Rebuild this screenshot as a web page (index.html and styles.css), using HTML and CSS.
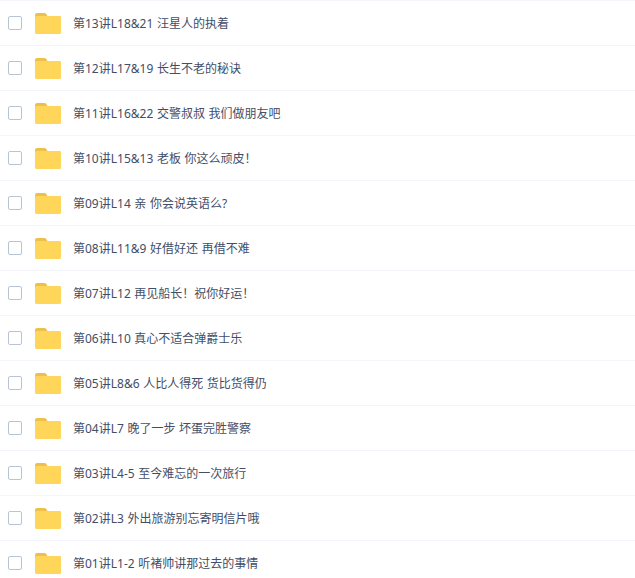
FILE: index.html
```html
<!DOCTYPE html>
<html lang="zh-CN">
<head>
<meta charset="utf-8">
<title>文件列表</title>
<link rel="stylesheet" href="styles.css">
</head>
<body>
<svg class="sprite" width="0" height="0" aria-hidden="true">
  <symbol id="folder" viewBox="0 0 26 21">
    <path class="folder-back" d="M0 2a2 2 0 0 1 2-2h7.5a2 2 0 0 1 1.6.8L12.5 3H24a2 2 0 0 1 2 2v4H0z"/>
    <rect class="folder-front" x="0" y="3" width="26" height="18" rx="1.5"/>
  </symbol>
</svg>
<ul class="list">
  <li class="row"><span class="check"></span><svg class="folder"><use href="#folder"/></svg><span class="name">第13讲L18&amp;21 汪星人的执着</span></li>
  <li class="row"><span class="check"></span><svg class="folder"><use href="#folder"/></svg><span class="name">第12讲L17&amp;19 长生不老的秘诀</span></li>
  <li class="row"><span class="check"></span><svg class="folder"><use href="#folder"/></svg><span class="name">第11讲L16&amp;22 交警叔叔 我们做朋友吧</span></li>
  <li class="row"><span class="check"></span><svg class="folder"><use href="#folder"/></svg><span class="name">第10讲L15&amp;13 老板 你这么顽皮！</span></li>
  <li class="row"><span class="check"></span><svg class="folder"><use href="#folder"/></svg><span class="name">第09讲L14 亲 你会说英语么?</span></li>
  <li class="row"><span class="check"></span><svg class="folder"><use href="#folder"/></svg><span class="name">第08讲L11&amp;9 好借好还 再借不难</span></li>
  <li class="row"><span class="check"></span><svg class="folder"><use href="#folder"/></svg><span class="name">第07讲L12 再见船长！祝你好运！</span></li>
  <li class="row"><span class="check"></span><svg class="folder"><use href="#folder"/></svg><span class="name">第06讲L10 真心不适合弹爵士乐</span></li>
  <li class="row"><span class="check"></span><svg class="folder"><use href="#folder"/></svg><span class="name">第05讲L8&amp;6 人比人得死 货比货得仍</span></li>
  <li class="row"><span class="check"></span><svg class="folder"><use href="#folder"/></svg><span class="name">第04讲L7 晚了一步 坏蛋完胜警察</span></li>
  <li class="row"><span class="check"></span><svg class="folder"><use href="#folder"/></svg><span class="name">第03讲L4-5 至今难忘的一次旅行</span></li>
  <li class="row"><span class="check"></span><svg class="folder"><use href="#folder"/></svg><span class="name">第02讲L3 外出旅游别忘寄明信片哦</span></li>
  <li class="row"><span class="check"></span><svg class="folder"><use href="#folder"/></svg><span class="name">第01讲L1-2 听褚帅讲那过去的事情</span></li>
</ul>
</body>
</html>
```
FILE: styles.css
```css
html, body {
  margin: 0;
  padding: 0;
  background: #fff;
  overflow: hidden;
}
.sprite {
  position: absolute;
}
.list {
  list-style: none;
  margin: 0;
  padding: 0;
  font-family: "Noto Sans", "Noto Sans CJK SC", sans-serif;
  font-size: 12px;
  color: #424e67;
}
.row {
  display: flex;
  align-items: center;
  height: 44px;
  border-top: 1px solid #f4f5fb;
  padding-left: 8px;
}
.check {
  box-sizing: border-box;
  width: 14px;
  height: 14px;
  border: 1px solid #b8c4d4;
  border-radius: 2px;
  background: #fff;
  flex: none;
}
.folder {
  width: 26px;
  height: 21px;
  margin-left: 13px;
  flex: none;
}
.folder-back {
  fill: #edbf4c;
}
.folder-front {
  fill: #ffd659;
}
.name {
  margin-left: 12px;
  white-space: nowrap;
  word-spacing: 0.5px;
}
```
